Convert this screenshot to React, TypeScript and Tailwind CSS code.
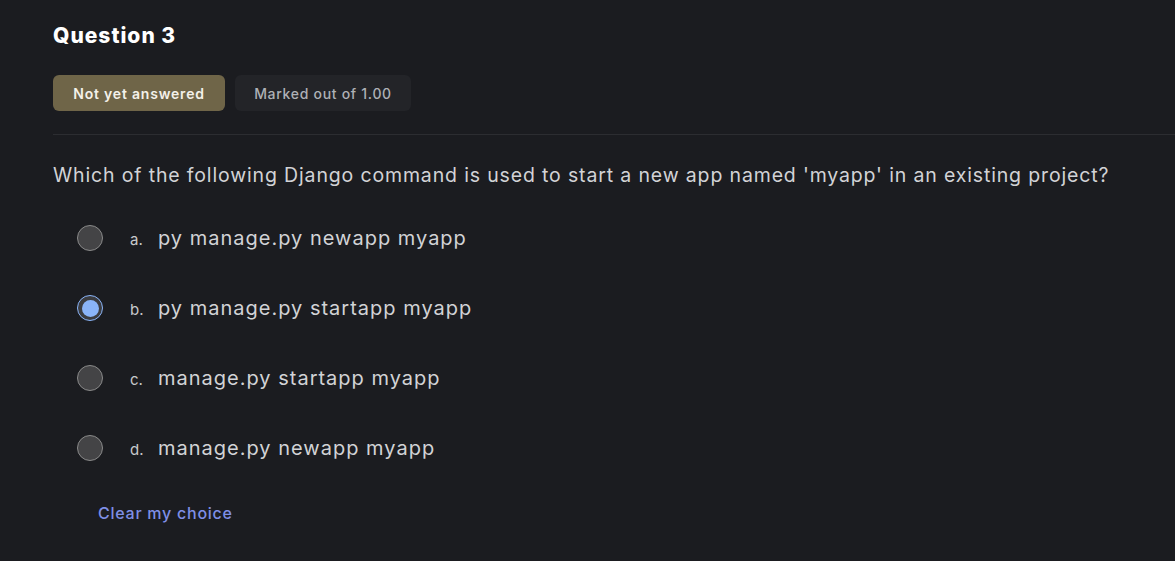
import React from "react";

const options = [
  { l: "a.", t: "py manage.py newapp myapp", sel: false },
  { l: "b.", t: "py manage.py startapp myapp", sel: true },
  { l: "c.", t: "manage.py startapp myapp", sel: false },
  { l: "d.", t: "manage.py newapp myapp", sel: false },
];

function Radio({ sel }: { sel: boolean }) {
  if (sel) {
    return (
      <span className="flex h-[26px] w-[26px] items-center justify-center rounded-full border border-[#8ab4f8] bg-[#3b3c40]">
        <span className="h-[17px] w-[17px] rounded-full bg-[#8ab4f8]" />
      </span>
    );
  }
  return <span className="h-[26px] w-[26px] rounded-full border-[1.5px] border-[#8a8a8a] bg-[#444446]" />;
}

export default function App() {
  return (
    <div
      className="min-h-[561px] bg-[#1b1c20] pl-[53px] pt-[22px]"
      style={{ fontFamily: "Inter, 'Noto Sans', sans-serif" }}
    >
      <h2 className="text-[21px] font-extrabold leading-[28px] tracking-[1px] text-white">Question 3</h2>
      <div className="mt-[25px] flex gap-[10px]">
        <span className="flex h-[36px] w-[172px] items-center justify-center rounded-[6px] bg-[#6f6548] text-[14px] font-semibold tracking-[0.8px] text-[#f4f1ea]">
          Not yet answered
        </span>
        <span className="flex h-[36px] w-[176px] items-center justify-center rounded-[6px] bg-[#232428] text-[14px] font-medium tracking-[0.7px] text-[#aeb1b6]">
          Marked out of 1.00
        </span>
      </div>
      <div className="mt-[23px] h-px bg-[#2c2d31]" />
      <p className="mt-[26px] text-[19.5px] leading-[28px] tracking-[0.85px] text-[#d2d3d6]">
        Which of the following Django command is used to start a new app named 'myapp' in an existing project?
      </p>
      <div className="mt-[14px] flex flex-col">
        {options.map((o) => (
          <div key={o.l} className="flex h-[70px] items-center pl-[24px]">
            <Radio sel={o.sel} />
            <div className="ml-[27px] flex items-baseline">
              <span className="w-[28px] text-[15px] text-[#c8c9cc]">{o.l}</span>
              <span className="text-[20px] tracking-[1px] text-[#d2d3d6]">{o.t}</span>
            </div>
          </div>
        ))}
      </div>
      <div className="mt-[18px] pl-[45px] text-[16px] font-medium leading-[24px] tracking-[0.75px] text-[#7f8fe6]">
        Clear my choice
      </div>
    </div>
  );
}
